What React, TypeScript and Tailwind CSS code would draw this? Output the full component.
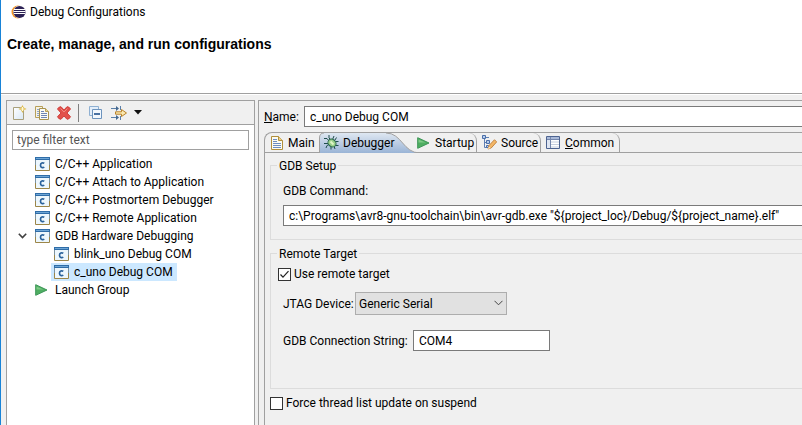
import { useState } from 'react';
import type { ReactNode } from 'react';

const line = 'border-[#a0a0a0]';

function EclipseIcon() {
  return (
    <svg width="16" height="14" viewBox="0 0 16 14" aria-hidden="true">
      <circle cx="7" cy="7" r="6.5" fill="#f7941e" />
      <circle cx="8.6" cy="7" r="6.4" fill="#fff" />
      <circle cx="8.5" cy="7" r="6.1" fill="#2c2255" />
      <path d="M3 4.5h11M2.5 6.5h12M3 8.5h11" stroke="#fff" strokeWidth="1" />
    </svg>
  );
}

function NewIcon() {
  return (
    <svg width="16" height="16" viewBox="0 0 16 16" aria-hidden="true">
      <defs>
        <linearGradient id="sheet" x2="1" y2="1">
          <stop stopColor="#fff" />
          <stop offset="1" stopColor="#d9e8f6" />
        </linearGradient>
      </defs>
      <path d="M1.500 2.500h7l3 3.500v8.500h-10z" fill="url(#sheet)" stroke="#a9a07c" />
      <path d="M10.500 0l1.200 2.600L14.500 4l-2.800 1.200L10.500 8 9.200 5.200 6.500 4l2.700-1.400z" fill="#dcb949" />
      <path d="M10.500 2v4M8.500 4h4" stroke="#fff8d8" />
    </svg>
  );
}

function CopyIcon() {
  return (
    <svg width="16" height="16" viewBox="0 0 16 16" aria-hidden="true">
      <path d="M1.500 1.500h7v11h-7z" fill="#f6f3e4" stroke="#b79f5a" />
      <path d="M3 4.500h2M3 6.500h2M3 8.500h2M3 10.500h2" stroke="#8ea3c8" />
      <path d="M5.500 3.500h6l3 3v8h-9z" fill="#fbfbf6" stroke="#a8924f" />
      <path d="M11.500 3.500v3h3" fill="#ecd894" stroke="#b79f5a" />
      <path d="M7 6.500h3M7 8.500h6M7 10.500h6M7 12.500h6" stroke="#6f86b5" />
    </svg>
  );
}

function DeleteIcon() {
  return (
    <svg width="16" height="16" viewBox="0 0 16 16" aria-hidden="true">
      <path
        d="M5 1.700l3 3.300 3-3.300q2.500.1 3.500 2.300L11 8l3.500 3.700q-1 2.500-3.500 2.600L8 11l-3 3.300q-2.500-.1-3.500-2.600L5 8 1.500 4q1-2.200 3.500-2.300z"
        fill="#e2504a"
        stroke="#d0403c"
      />
      <path d="M4.500 3.500L8 7l3.500-3.500" fill="none" stroke="#ee8a80" />
    </svg>
  );
}

function CollapseIcon() {
  return (
    <svg width="16" height="16" viewBox="0 0 16 16" aria-hidden="true">
      <path d="M.5 1.500h9v9h-9z" fill="#e3eefa" stroke="#8fb0d2" />
      <path d="M3.500 4.500h9v9h-9z" fill="#f2f8fe" stroke="#6c93bd" />
      <path d="M5 9h6" stroke="#1d4f8c" strokeWidth="1.600" />
    </svg>
  );
}

function FilterIcon() {
  return (
    <svg width="17" height="16" viewBox="0 0 17 16" aria-hidden="true">
      <path d="M0 3.500h7M0 12.500h7" stroke="#5b7fa8" />
      <path d="M5 1l3 2.500L5 6zM5 10l3 2.500L5 15z" fill="#44688f" />
      <path d="M9.500 1v4M9.500 11v4" stroke="#5b7fa8" />
      <path d="M4.500 6.800h6V4.500l5 3.500-5 3.500V9.200h-6z" fill="#fbe9b0" stroke="#b9822a" />
    </svg>
  );
}

function AppIcon() {
  return (
    <svg className="shrink-0" width="15" height="14" viewBox="0 0 15 14" aria-hidden="true">
      <path d="M.5.5h14v13H.5z" fill="#edf7fd" stroke="#9c8648" />
      <path d="M0 0h15v3H0z" fill="#2f6da8" />
      <path d="M1 1h13v1H1z" fill="#6ea6d6" />
      <path d="M.5 3v5M14.500 3v5" stroke="#7b91a0" />
      <path d="M9.300 6.300C7.800 5.300 5.500 5.700 5.500 8.200s2.300 2.900 3.800 1.900" fill="none" stroke="#2b639c" strokeWidth="1.700" />
    </svg>
  );
}

function RunIcon() {
  return (
    <svg className="shrink-0" width="13" height="14" viewBox="0 0 13 14" aria-hidden="true">
      <path d="M.7 1.700L12 7 .7 12.300z" fill="#4fae62" stroke="#3c9657" />
      <path d="M1.500 3.500l7 3h-7z" fill="#7fca86" />
    </svg>
  );
}

function DocIcon() {
  return (
    <svg width="12" height="14" viewBox="0 0 12 14" aria-hidden="true">
      <path d="M.5.5h7l4 4v9H.5z" fill="#fbfbf3" stroke="#b08f3c" />
      <path d="M7.500.5v4h4" fill="#ecd28a" stroke="#b08f3c" />
      <path d="M2 3.500h4M2 5.500h4M2 7.500h8M2 9.500h8M2 11.500h8" stroke="#6d8cc0" />
    </svg>
  );
}

function BugIcon() {
  return (
    <svg width="15" height="15" viewBox="0 0 15 15" aria-hidden="true">
      <path
        d="M5 0v3l2 2M10 1L8.500 4.500M0 3.500h3L5 6M0 8.500h4M2 13l1-2.500 2-1M7 14.500V12M11 14l-1-3M14.500 10.500H12L11 9M14.500 6.500h-3M12.500 2.500L11 5"
        fill="none"
        stroke="#1f4c4c"
      />
      <ellipse cx="8" cy="8" rx="4.300" ry="3.600" transform="rotate(40 8 8)" fill="#9bd08a" stroke="#2c6a50" />
      <path d="M6.500 6.500l3 3" stroke="#e0f5c8" strokeWidth="1.800" />
    </svg>
  );
}

function SourceIcon() {
  return (
    <svg width="15" height="15" viewBox="0 0 15 15" aria-hidden="true">
      <path d="M2.500 3v9.500H5M2.500 7.500H5M4 2.500h3" fill="none" stroke="#5d7fb4" />
      <path d="M.5.500h3v3h-3zM4.500 5.500h3v3h-3zM4.500 10.500h2v2h-2z" fill="#b7cdec" stroke="#4a6ea9" />
      <path d="M6 14l1-3.500 5.500-5.800 2.200 2.200L9.200 13z" fill="#f3b768" stroke="#b9742c" strokeWidth=".8" />
      <path d="M6 14l.8-2.600L8.700 13z" fill="#fff0d0" />
    </svg>
  );
}

function TableIcon() {
  return (
    <svg width="14" height="13" viewBox="0 0 14 13" aria-hidden="true">
      <path d="M.5.500h13v12H.5z" fill="#fff" stroke="#4d6390" />
      <path d="M1 1h12v2H1z" fill="#a9b9d8" />
      <path d="M1 3h3v9H1z" fill="#dfe6f2" />
      <path d="M1 3.500h12M4.500 1v11" stroke="#7486ac" />
      <path d="M5 6h8M5 8.500h8M5 11h8" stroke="#c5cede" />
    </svg>
  );
}

function ToolButton({ label, children }: { label: string; children: ReactNode }) {
  return (
    <button type="button" aria-label={label} className="flex h-5 items-center justify-center">
      {children}
    </button>
  );
}

function TreeItem({ label, icon = 'app', child = false, open = false, selected = false }: {
  label: string;
  icon?: 'app' | 'run';
  child?: boolean;
  open?: boolean;
  selected?: boolean;
}) {
  return (
    <li role="treeitem" aria-selected={selected} className={`flex h-[18px] items-center ${child ? 'pl-11' : 'pl-[25px]'}`}>
      {open && (
        <svg className="-ml-[14px] mr-[5px]" width="9" height="6" viewBox="0 0 9 6" aria-hidden="true">
          <path d="M.8.8l3.700 3.700L8.200.8" fill="none" stroke="#404040" strokeWidth="1.600" />
        </svg>
      )}
      <button type="button" className={`flex h-[18px] items-center gap-[5px] pl-[3px] pr-1 whitespace-nowrap ${selected ? 'bg-[#cce8ff]' : ''}`}>
        <span className="flex w-[15px]">{icon === 'app' ? <AppIcon /> : <RunIcon />}</span>
        {label}
      </button>
    </li>
  );
}

function Tab({ label, icon, width }: { label: ReactNode; icon: ReactNode; width: string }) {
  return (
    <button type="button" role="tab" aria-selected={false} className={`flex shrink-0 items-center rounded-tr-lg border-r ${line} ${width}`}>
      {icon}
      {label}
    </button>
  );
}

function Group({ title, height, children }: { title: string; height: string; children: ReactNode }) {
  return (
    <fieldset className={`border border-r-0 border-[#dcdcdc] ${height}`}>
      <legend className="float-left -mt-[9px] ml-[6px] h-[18px] bg-[#f0f0f0] px-[2px] leading-[18px]">{title}</legend>
      <div className="clear-both pl-3">{children}</div>
    </fieldset>
  );
}

const box = 'border border-[#7a7a7a] bg-white h-[21px] px-[5px] outline-none';

export default function App() {
  const [remote, setRemote] = useState(true);
  const [force, setForce] = useState(false);
  return (
    <div className="flex h-screen flex-col overflow-hidden border-l border-[#1883d7] bg-[#f0f0f0] font-['Roboto','Open_Sans',sans-serif] text-[12px] leading-[18px] text-black">
      <header className={`h-[94px] shrink-0 border-b bg-white ${line}`}>
        <div className="flex h-6 items-center gap-[3px] pl-[10px]">
          <EclipseIcon />
          <span>Debug Configurations</span>
        </div>
        <h1 className="mt-[11px] pl-[6px] font-['Liberation_Sans',sans-serif] text-[14px] font-bold">Create, manage, and run configurations</h1>
      </header>
      <main className="flex min-h-0 flex-1 gap-[3px] border-t border-white pl-[5px] pt-[5px]">
        <section className={`flex w-[249px] shrink-0 flex-col border border-b-0 ${line}`}>
          <div className={`flex h-6 shrink-0 items-center border-b pl-[5px] ${line}`}>
            <div className="flex items-center gap-[6px]">
              <ToolButton label="New launch configuration"><NewIcon /></ToolButton>
              <ToolButton label="Duplicate"><CopyIcon /></ToolButton>
              <ToolButton label="Delete"><DeleteIcon /></ToolButton>
              <span className="mr-1 h-[18px] w-px bg-[#808080]" />
              <ToolButton label="Collapse all"><CollapseIcon /></ToolButton>
              <ToolButton label="Filter"><FilterIcon /></ToolButton>
              <ToolButton label="Filter menu">
                <svg width="8" height="5" viewBox="0 0 8 5" aria-hidden="true"><path d="M0 0h8L4 4.500z" fill="#111" /></svg>
              </ToolButton>
            </div>
          </div>
          <div className="min-h-0 flex-1 bg-white px-[5px] pt-[5px]">
            <input aria-label="Filter" placeholder="type filter text" className="block h-5 w-full border border-[#a0a0a0] px-1 outline-none placeholder:text-[#555]" />
            <ul role="tree" className="-ml-[5px] mt-[5px]">
              <TreeItem label="C/C++ Application" />
              <TreeItem label="C/C++ Attach to Application" />
              <TreeItem label="C/C++ Postmortem Debugger" />
              <TreeItem label="C/C++ Remote Application" />
              <TreeItem label="GDB Hardware Debugging" open />
              <TreeItem label="blink_uno Debug COM" child />
              <TreeItem label="c_uno Debug COM" child selected />
              <TreeItem label="Launch Group" icon="run" />
            </ul>
          </div>
        </section>
        <section className={`flex min-w-0 flex-1 flex-col border-l border-t pl-[5px] pt-[5px] ${line}`}>
          <div className="flex items-center">
            <label htmlFor="name" className="w-10 shrink-0"><u>N</u>ame:</label>
            <input id="name" defaultValue="c_uno Debug COM" className={`${box} min-w-0 flex-1 border-r-0`} />
          </div>
          <div className={`mt-[5px] flex min-h-0 flex-1 flex-col rounded-tl-lg border-l border-t ${line}`}>
            <div role="tablist" className={`flex h-5 shrink-0 border-b ${line}`}>
              <button type="button" role="tab" aria-selected={false} className="flex w-[54px] shrink-0 items-center gap-[5px] pl-[6px]">
                <DocIcon />
                Main
              </button>
              <button type="button" role="tab" aria-selected className="relative flex w-[101px] shrink-0 items-center gap-1 pl-[5px]">
                <svg className="absolute left-0 top-0 h-5 w-[101px]" viewBox="0 0 101 20" aria-hidden="true">
                  <defs>
                    <linearGradient id="tab" x2="0" y2="1">
                      <stop stopColor="#dfe7f1" />
                      <stop offset="1" stopColor="#9ab4d6" />
                    </linearGradient>
                  </defs>
                  <path d="M.5 20V5Q.5 0 5 0H67C83 0 84 20 101 20z" fill="url(#tab)" />
                  <path d="M.5 20V5Q.5 0 5 0M67 0C83 0 84 20 101 20" fill="none" stroke="#a0a0a0" />
                </svg>
                <span className="relative"><BugIcon /></span>
                <span className="relative">Debugger</span>
              </button>
              <Tab width="w-[60px] -ml-[3px] gap-[5px]" icon={<RunIcon />} label="Startup" />
              <Tab width="w-16 pl-[5px] gap-1" icon={<SourceIcon />} label="Source" />
              <Tab width="w-[79px] pl-[5px] gap-[5px]" icon={<TableIcon />} label={<span><u>C</u>ommon</span>} />
            </div>
            <div className="flex flex-col pl-[5px] pt-3">
              <Group title="GDB Setup" height="h-[75px]">
                <label htmlFor="command" className="block pt-[7px]">GDB Command:</label>
                <input id="command" defaultValue={'c:\\Programs\\avr8-gnu-toolchain\\bin\\avr-gdb.exe "${project_loc}/Debug/${project_name}.elf"'} className={`${box} mt-[5px] block w-full border-r-0`} />
              </Group>
              <div className="h-[13px]" />
              <Group title="Remote Target" height="h-[136px]">
                <label className="-ml-[5px] flex h-[22px] items-center gap-[3px]">
                  <Check checked={remote} onChange={setRemote} />
                  Use remote target
                </label>
                <div className="mt-[7px] flex items-center">
                  <label htmlFor="device" className="w-[72px] whitespace-nowrap">JTAG Device:</label>
                  <div className="relative">
                    <select id="device" className="block h-[23px] w-[152px] appearance-none border border-[#adadad] bg-[#e1e1e1] px-[3px] outline-none">
                      <option>Generic Serial</option>
                    </select>
                    <svg className="pointer-events-none absolute right-1 top-2 h-[6px] w-[9px]" viewBox="0 0 9 6" aria-hidden="true">
                      <path d="M.5.8l4 4 4-4" fill="none" stroke="#444" />
                    </svg>
                  </div>
                </div>
                <div className="mt-[15px] flex items-center">
                  <label htmlFor="conn" className="w-[130px] whitespace-nowrap">GDB Connection String:</label>
                  <input id="conn" defaultValue="COM4" className={`${box} w-[137px]`} />
                </div>
              </Group>
              <label className="mt-[5px] flex items-center gap-[3px]">
                <Check checked={force} onChange={setForce} />
                Force thread list update on suspend
              </label>
            </div>
          </div>
        </section>
      </main>
    </div>
  );
}

function Check({ checked, onChange }: { checked: boolean; onChange: (v: boolean) => void }) {
  return (
    <span className="relative flex">
      <input type="checkbox" checked={checked} onChange={(e) => onChange(e.target.checked)} className="h-[13px] w-[13px] appearance-none border border-[#333] bg-white" />
      {checked && (
        <svg className="pointer-events-none absolute left-0 top-0" width="13" height="13" viewBox="0 0 13 13" aria-hidden="true">
          <path d="M2.500 6.500L5 9.200l5.500-6" fill="none" stroke="#222" strokeWidth="1.200" />
        </svg>
      )}
    </span>
  );
}
